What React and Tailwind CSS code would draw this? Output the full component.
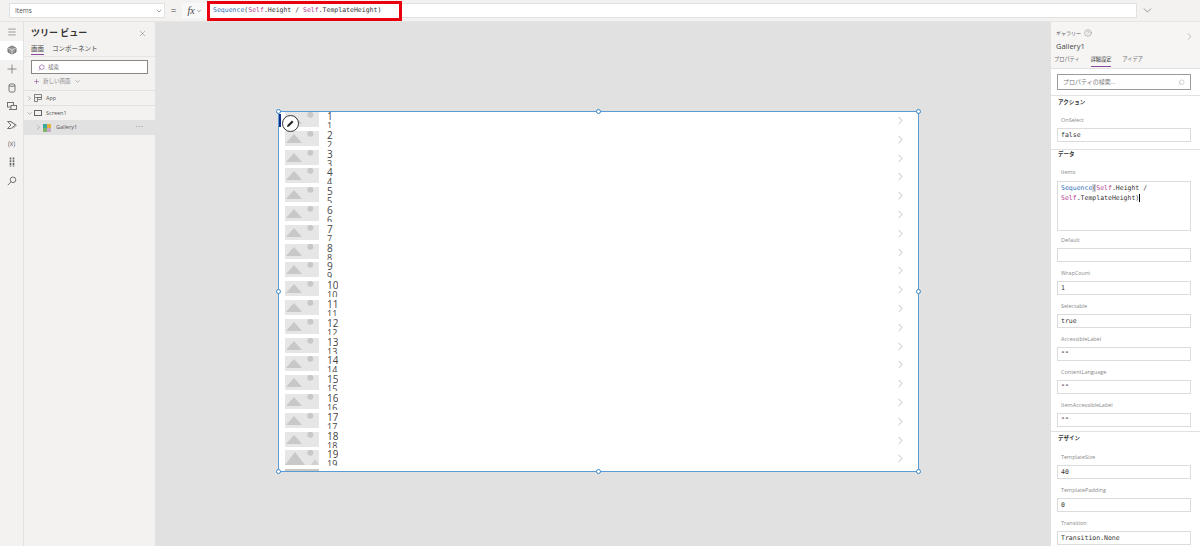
import React from 'react'
import { ChevronDown, ChevronRight, X, Menu, Plus, Search, HelpCircle } from 'lucide-react'

const FONT = "font-['Open_Sans','Noto_Sans_CJK_JP',sans-serif]"
const MONO = "font-['DejaVu_Sans_Mono','Liberation_Mono',monospace]"

function Thumb({ big }) {
  return (
    <svg width="34" height="15" viewBox="0 0 34 15" className="block shrink-0">
      <rect width="34" height="15" fill="#e6e6e6" />
      {big ? (
        <>
          <path d="M0 15 L10 2 L20 15 Z" fill="#c8c8c8" />
          <path d="M26 15 L30 9 L34 15 Z" fill="#d0d0d0" />
        </>
      ) : (
        <path d="M1 12 L9 3 L17 12 Z" fill="#c8c8c8" />
      )}
      <circle cx="25.3" cy="2.8" r="3" fill="#c8c8c8" />
    </svg>
  )
}

function Row({ n }) {
  return (
    <div className="h-[18.8px] shrink-0 flex overflow-hidden relative">
      <div className="ml-[6px] w-[34px] shrink-0">
        <Thumb big={n === 19} />
      </div>
      <div className="ml-[8px] h-[16px] overflow-hidden text-[#444]">
        <div className="text-[10px] leading-[10px] -mt-[1px]">{n}</div>
        <div className="text-[9px] leading-[10px]">{n}</div>
      </div>
      <ChevronRight className="absolute right-[11px] top-[2px] text-[#8a8a8a]" size={13} strokeWidth={1} />
    </div>
  )
}

function Handle({ className }) {
  return <div className={`absolute w-[5px] h-[5px] rounded-full bg-white border border-[#3a87c8] ${className}`}></div>
}

function Field({ label, value }) {
  return (
    <div className="h-[33px] pt-[2.5px] shrink-0">
      <div className="pl-[10px] text-[5.5px] leading-[12px] h-[14px] text-[#8a8a8a]">{label}</div>
      <div className={`ml-[6px] mr-[9px] h-[14px] border border-[#dcdcdc] px-[3px] text-[6.5px] leading-[12px] text-[#333] ${MONO}`}>
        {value}
      </div>
    </div>
  )
}

function Section({ children, className }) {
  return <div className={`pl-[7px] text-[5.5px] font-semibold leading-[7px] text-[#333] shrink-0 ${className}`}>{children}</div>
}

function RailIcon({ children }) {
  return (
    <svg width="10" height="10" viewBox="0 0 10 10" fill="none" stroke="currentColor" strokeWidth="0.9">
      {children}
    </svg>
  )
}

const railIcons = [
  <RailIcon key="tree">
    <path d="M5 1 L9 3 L9 7 L5 9 L1 7 L1 3 Z" fill="#999" />
    <path d="M1 3 L5 5 L9 3 M5 5 L5 9" stroke="#fff" strokeWidth="0.6" />
  </RailIcon>,
  <RailIcon key="plus">
    <path d="M5 0.5 V9.5 M0.5 5 H9.5" strokeWidth="0.7" />
  </RailIcon>,
  <RailIcon key="data">
    <rect x="2" y="1" width="6" height="8" rx="1.5" />
    <path d="M2 2.8 Q5 4 8 2.8" />
  </RailIcon>,
  <RailIcon key="media">
    <rect x="0.5" y="1.5" width="6" height="4.5" />
    <rect x="4" y="4.5" width="5.5" height="4" fill="#f3f2f1" />
    <path d="M2 8.5 H4" />
  </RailIcon>,
  <RailIcon key="flow">
    <path d="M0.5 1.5 H4 L8.5 5 L4 8.5 H0.5 L4 5 Z" />
    <path d="M3 1.5 L9.5 5 L6 8.5" strokeWidth="0.6" />
  </RailIcon>,
  <span key="var" className="text-[6.5px]">(x)</span>,
  <RailIcon key="adv">
    <path d="M3.5 0.5 V9.5 M6.5 0.5 V9.5" strokeWidth="1.6" strokeDasharray="2 0.7" />
  </RailIcon>,
  <RailIcon key="search">
    <circle cx="6" cy="3.8" r="2.8" />
    <path d="M4 5.8 L0.8 9.2" />
  </RailIcon>,
]

function App() {
  const rows = Array.from({ length: 19 }, (_, i) => i + 1)

  return (
    <div className={`w-[1200px] h-[546px] overflow-hidden flex flex-col bg-[#e1e1e1] ${FONT}`}>
      {/* formula bar */}
      <div className="h-[22px] shrink-0 bg-[#f3f2f1] flex items-center border-b border-[#e6e5e4]">
        <div className="ml-[9px] w-[156px] h-[15px] bg-white border border-[#e1e1e1] flex items-center pl-[5px] pr-[1px] justify-between text-[6.5px] text-[#555]">
          Items
          <ChevronDown size={8} className="text-[#777]" />
        </div>
        <div className="w-[17px] text-center text-[10px] text-[#444]">=</div>
        <div className="w-[25px] h-[15px] bg-[#f8f8f8] flex items-center justify-center gap-[1px] text-[#444]">
          <span className="font-['Liberation_Serif',serif] italic text-[10px]">fx</span>
          <ChevronDown size={6} />
        </div>
        <div className="w-[195px] h-[20px] border-[3px] border-[#e8000f] bg-white flex items-center pl-[3px] shrink-0">
          <span className={`text-[6.5px] whitespace-nowrap text-[#333] ${MONO}`}>
            <span className="text-[#2f6fb5]">Sequence</span>(<span className="text-[#b5408f]">Self</span>.Height / <span className="text-[#b5408f]">Self</span>.TemplateHeight)
          </span>
        </div>
        <div className="w-[735px] h-[15px] bg-white border border-[#e1e1e1] border-l-0 shrink-0"></div>
        <ChevronDown size={13} strokeWidth={1.2} className="ml-[4px] text-[#666]" />
      </div>

      <div className="flex flex-1 min-h-0">
        {/* icon rail */}
        <div className="w-[24px] shrink-0 bg-[#f3f2f1] border-r border-[#e1e1e1] flex flex-col items-center text-[#666]">
          <div className="h-[19px] w-full flex items-center justify-center">
            <Menu size={10} strokeWidth={1.5} />
          </div>
          {railIcons.map((icon, i) => (
            <div key={i} className={`h-[18.7px] w-full flex items-center justify-center ${i === 0 ? 'bg-white' : ''}`}>
              {icon}
            </div>
          ))}
        </div>

        {/* tree view */}
        <div className="w-[131px] shrink-0 bg-[#f3f2f1] flex flex-col">
          <div className="h-[22px] flex items-center justify-between pl-[7px] pr-[8px]">
            <span className="text-[9px] font-semibold text-[#333]">ツリー ビュー</span>
            <X size={9} strokeWidth={1} className="text-[#555]" />
          </div>
          <div className="flex gap-[8px] pl-[7px] h-[11px] text-[6.5px] leading-[10px] text-[#444]">
            <span className="border-b border-[#8a4a9c] h-[11px]">画面</span>
            <span>コンポーネント</span>
          </div>
          <div className="h-[1px] bg-[#e6e5e4] mt-[1px]"></div>
          <div className="mx-[7px] mt-[3px] h-[14px] bg-white border border-[#8a8886] flex items-center pl-[6px] gap-[3px] text-[5.5px] text-[#777]">
            <Search size={7} className="-scale-x-100 text-[#8a4a9c]" />
            検索
          </div>
          <div className="h-[15px] flex items-center pl-[9px] gap-[3px] text-[5.5px] text-[#888]">
            <Plus size={7} className="text-[#8a4a9c]" />
            新しい画面
            <ChevronDown size={7} />
          </div>
          <div className="h-[15px] mt-[1px] border-t border-[#e1e1e1] flex items-center pl-[2px] gap-[1px] text-[5.5px] text-[#555]">
            <ChevronRight size={7} className="text-[#888]" />
            <svg width="8" height="8" viewBox="0 0 8 8" fill="none" stroke="#666" strokeWidth="0.8" className="mr-[3px]">
              <path d="M0.5 0.5 H7.5 V3.5 H0.5 Z M3.5 3.5 V7.5 H0.5 V3.5 M3.5 3.5 H7.5 V5.5 H3.5" />
            </svg>
            App
          </div>
          <div className="h-[15px] border-t border-[#e1e1e1] flex items-center pl-[2px] gap-[1px] text-[5.5px] text-[#555]">
            <ChevronDown size={7} className="text-[#888]" />
            <span className="w-[8px] h-[6px] border border-[#666] mr-[3px]"></span>
            Screen1
          </div>
          <div className="h-[15px] bg-[#e1e1e1] flex items-center pl-[11px] gap-[1px] text-[5.5px] text-[#555]">
            <ChevronRight size={7} className="text-[#888]" />
            <svg width="8" height="8" viewBox="0 0 8 8" className="mr-[4px]">
              <rect width="4" height="4" fill="#3aa6a0" />
              <rect x="4" width="4" height="4" fill="#e3b23c" />
              <rect y="4" width="4" height="4" fill="#7cb86a" />
              <rect x="4" y="4" width="4" height="4" fill="#c9a8c9" />
            </svg>
            Gallery1
            <span className="ml-auto mr-[11px] text-[7px] tracking-[1px] text-[#666]">···</span>
          </div>
        </div>

        {/* canvas */}
        <div className="w-[895px] shrink-0 relative bg-[#e1e1e1]">
          <div className="absolute left-[123px] top-[89px] w-[641px] h-[361px] bg-white border border-[#5a9bd5]">
            <div className="h-full overflow-hidden flex flex-col">
              {rows.map((n) => (
                <Row key={n} n={n} />
              ))}
              <div className="ml-[6px] w-[34px] h-[4px] bg-[#c8c8c8] shrink-0"></div>
            </div>
            <div className="absolute left-0 top-[2px] w-[2px] h-[13px] bg-[#0f2f86]"></div>
            <div className="absolute left-[3px] top-[3px] w-[17px] h-[17px] rounded-full bg-white border border-[#333] flex items-center justify-center">
              <svg width="9" height="9" viewBox="0 0 9 9">
                <path d="M1 8 L1.5 6 L6 1.5 L7.5 3 L3 7.5 Z" fill="#222" />
              </svg>
            </div>
            <Handle className="-left-[3px] -top-[3px]" />
            <Handle className="left-[317px] -top-[3px]" />
            <Handle className="-right-[3px] -top-[3px]" />
            <Handle className="-left-[3px] top-[177px]" />
            <Handle className="-right-[3px] top-[177px]" />
            <Handle className="-left-[3px] -bottom-[3px]" />
            <Handle className="left-[317px] -bottom-[3px]" />
            <Handle className="-right-[3px] -bottom-[3px]" />
          </div>
        </div>

        {/* properties panel */}
        <div className="w-[150px] shrink-0 bg-white border-l border-[#e1e1e1] flex flex-col overflow-hidden">
          <div className="bg-[#f6f5f4] h-[46px] relative shrink-0">
            <div className="pl-[5px] pt-[7px] flex items-center gap-[3px] text-[5px] leading-[8px] text-[#555]">
              ギャラリー
              <HelpCircle size={8} strokeWidth={1} />
            </div>
            <div className="pl-[5px] mt-[3px] text-[7.5px] leading-[12px] text-[#444]">Gallery1</div>
            <ChevronRight size={11} strokeWidth={1} className="absolute right-[5px] top-[9px] text-[#777]" />
            <div className="absolute left-[3px] top-[30px] flex gap-[11px] text-[5.2px] leading-[14px] text-[#666]">
              <span>プロパティ</span>
              <span className="text-[#333] border-b border-[#8a4a9c] h-[15px]">詳細設定</span>
              <span>アイデア</span>
            </div>
          </div>
          <div className="h-[1px] bg-[#e1e1e1] shrink-0"></div>
          <div className="ml-[6px] mr-[9px] mt-[5px] h-[16px] border border-[#9a9a9a] flex items-center justify-between px-[5px] text-[6px] text-[#777] shrink-0">
            プロパティの検索...
            <Search size={7} strokeWidth={1} className="-scale-x-100" />
          </div>
          <div className="h-[1px] bg-[#e1e1e1] mt-[5px] shrink-0"></div>
          <Section className="pt-[2.5px] pb-[5.5px]">アクション</Section>
          <Field label="OnSelect" value="false" />
          <div className="h-[1px] bg-[#e1e1e1] mt-[4.5px] shrink-0"></div>
          <Section className="pt-[1px]">データ</Section>
          <div className="pt-[10px] pl-[10px] text-[5.5px] leading-[8px] text-[#8a8a8a] h-[23px] shrink-0">Items</div>
          <div className={`ml-[6px] mr-[9px] mb-[1px] h-[50px] border border-[#dcdcdc] px-[3px] pt-[1px] text-[6.5px] leading-[10px] text-[#333] shrink-0 ${MONO}`}>
            <span className="text-[#2f6fb5]">Sequence</span><span className="bg-gray-300">(</span><span className="text-[#b5408f]">Self</span>.Height /<br />
            <span className="text-[#b5408f]">Self</span>.TemplateHeight)<span className="border-l border-black"></span>
          </div>
          <Field label="Default" value="" />
          <Field label="WrapCount" value="1" />
          <Field label="Selectable" value="true" />
          <Field label="AccessibleLabel" value={'""'} />
          <Field label="ContentLanguage" value={'""'} />
          <Field label="ItemAccessibleLabel" value={'""'} />
          <div className="h-[1px] bg-[#e1e1e1] mt-[1.5px] shrink-0"></div>
          <Section className="pt-[2.5px] pb-[6.5px]">デザイン</Section>
          <Field label="TemplateSize" value="40" />
          <Field label="TemplatePadding" value="0" />
          <Field label="Transition" value="Transition.None" />
        </div>
      </div>
    </div>
  )
}

export default App
